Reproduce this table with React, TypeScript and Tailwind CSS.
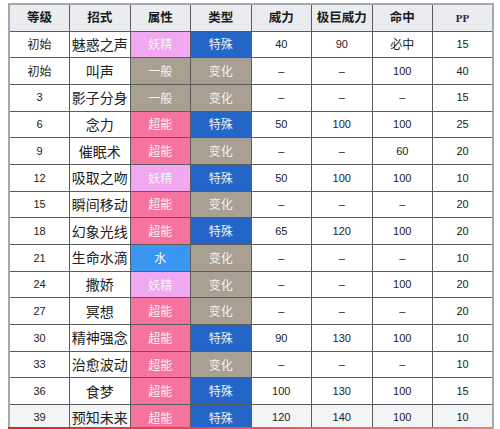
import React from 'react'

type Move = {
  lv: string
  name: string
  type: string
  cat: string
  power: string
  max: string
  acc: string
  pp: string
}

const moves: Move[] = [
  { lv: '初始', name: '魅惑之声', type: '妖精', cat: '特殊', power: '40', max: '90', acc: '必中', pp: '15' },
  { lv: '初始', name: '叫声', type: '一般', cat: '变化', power: '–', max: '–', acc: '100', pp: '40' },
  { lv: '3', name: '影子分身', type: '一般', cat: '变化', power: '–', max: '–', acc: '–', pp: '15' },
  { lv: '6', name: '念力', type: '超能', cat: '特殊', power: '50', max: '100', acc: '100', pp: '25' },
  { lv: '9', name: '催眠术', type: '超能', cat: '变化', power: '–', max: '–', acc: '60', pp: '20' },
  { lv: '12', name: '吸取之吻', type: '妖精', cat: '特殊', power: '50', max: '100', acc: '100', pp: '10' },
  { lv: '15', name: '瞬间移动', type: '超能', cat: '变化', power: '–', max: '–', acc: '–', pp: '20' },
  { lv: '18', name: '幻象光线', type: '超能', cat: '特殊', power: '65', max: '120', acc: '100', pp: '20' },
  { lv: '21', name: '生命水滴', type: '水', cat: '变化', power: '–', max: '–', acc: '–', pp: '10' },
  { lv: '24', name: '撒娇', type: '妖精', cat: '变化', power: '–', max: '–', acc: '100', pp: '20' },
  { lv: '27', name: '冥想', type: '超能', cat: '变化', power: '–', max: '–', acc: '–', pp: '20' },
  { lv: '30', name: '精神强念', type: '超能', cat: '特殊', power: '90', max: '130', acc: '100', pp: '10' },
  { lv: '33', name: '治愈波动', type: '超能', cat: '变化', power: '–', max: '–', acc: '–', pp: '10' },
  { lv: '36', name: '食梦', type: '超能', cat: '特殊', power: '100', max: '130', acc: '100', pp: '15' },
  { lv: '39', name: '预知未来', type: '超能', cat: '特殊', power: '120', max: '140', acc: '100', pp: '10' },
]

const typeBg: Record<string, string> = {
  妖精: 'bg-[#f0a8f0]',
  一般: 'bg-[#a8a090]',
  超能: 'bg-[#f6739e]',
  水: 'bg-[#3a96f0]',
}

const catBg: Record<string, string> = {
  特殊: 'bg-[#2466c8]',
  变化: 'bg-[#a8a092]',
}

const cjk = "font-['Noto_Sans_CJK_SC','Noto_Sans',sans-serif]"
const num = "font-['Liberation_Sans','Noto_Sans_CJK_SC',sans-serif]"

export default function App() {
  const headers = ['等级', '招式', '属性', '类型', '威力', '极巨威力', '命中', 'PP']
  return (
    <div className="w-[500px] h-[429px] bg-white pl-[8px] pt-[3px] relative overflow-hidden">
      <table className="w-[486px] table-fixed border-collapse border-2 border-[#a4a9ae] text-center text-[#222]">
        <thead>
          <tr className="h-[27px] bg-[#eaecf0]">
            {headers.map(h => (
              <th
                key={h}
                className={`border border-[#5c5c5c] font-bold p-0 ${
                  h === 'PP' ? "font-['Liberation_Serif',serif] text-[11px] text-[#332244]" : cjk + ' text-[12.5px] text-[#1a1a1a]'
                }`}
              >
                {h}
              </th>
            ))}
          </tr>
        </thead>
        <tbody>
          {moves.map((m, i) => {
            const last = i === moves.length - 1
            const plain = `border border-[#5c5c5c] p-0 ${last ? 'bg-[#f3f4f6]' : 'bg-white'}`
            return (
              <tr key={m.name} className="h-[26.7px]">
                <td className={`${plain} ${/\d/.test(m.lv) ? num + ' text-[11px]' : cjk + ' text-[12px]'}`}>{m.lv}</td>
                <td className={`${plain} ${cjk} text-[14px]`}>{m.name}</td>
                <td className={`border border-[#5c5c5c] p-0 ${typeBg[m.type]} ${cjk} text-[12px] text-[#f6f6f6]`}>{m.type}</td>
                <td className={`border border-[#5c5c5c] p-0 ${catBg[m.cat]} ${cjk} text-[12px] text-[#f2f2f2]`}>{m.cat}</td>
                <td className={`${plain} ${num} text-[11px]`}>{m.power}</td>
                <td className={`${plain} ${num} text-[11px]`}>{m.max}</td>
                <td className={`${plain} ${m.acc === '必中' ? cjk + ' text-[12px]' : num + ' text-[11px]'}`}>{m.acc}</td>
                <td className={`${plain} ${num} text-[11px]`}>{m.pp}</td>
              </tr>
            )
          })}
        </tbody>
      </table>
      <div className="absolute left-[8px] bottom-0 w-[484px] h-[2px] bg-gradient-to-r from-[#e02020] via-[#f05050] to-[#f08070]" />
    </div>
  )
}
